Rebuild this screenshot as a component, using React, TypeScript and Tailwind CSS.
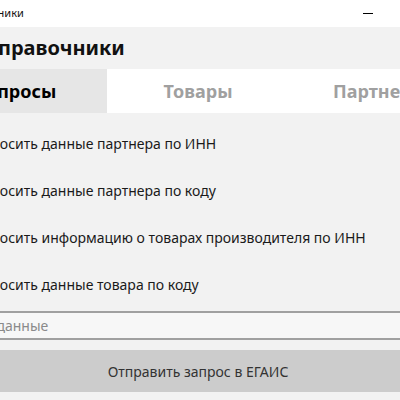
import React from 'react';

const items = [
    'Запросить данные партнера по ИНН',
    'Запросить данные партнера по коду',
    'Запросить информацию о товарах производителя по ИНН',
    'Запросить данные товара по коду',
];

export default function App() {
    return (
        <div className="w-[400px] h-[400px] overflow-hidden bg-[#f2f2f2] font-['Noto_Sans',sans-serif]">
            <div className="ml-[-75px] w-[546px]">
                {/* title bar */}
                <div className="h-[27px] bg-white flex items-center justify-between">
                    <span className="pl-[27px] text-[11px] text-[#111]">Справочники</span>
                    <div className="flex">
                        <div className="w-[46px] h-[27px] flex items-center justify-center">
                            <div className="w-[10px] h-[1px] bg-black" />
                        </div>
                        <div className="w-[80px]" />
                    </div>
                </div>

                {/* header */}
                <div className="h-[42px] flex items-center pl-[60px]">
                    <h1 className="text-[20px] font-bold text-[#111] leading-none">Справочники</h1>
                </div>

                {/* tabs */}
                <div className="grid grid-cols-3 h-[44px] bg-white">
                    <div className="bg-[#e6e6e6] flex items-center justify-center text-[18px] font-bold text-black">Запросы</div>
                    <div className="flex items-center justify-center text-[18px] font-bold text-[#a0a0a0]">Товары</div>
                    <div className="flex items-center justify-center text-[18px] font-bold text-[#a0a0a0]">Партнеры</div>
                </div>

                {/* list */}
                <div className="pt-[7px] pl-[42px]">
                    {items.map((t) => (
                        <div key={t} className="h-[47px] flex items-center text-[14px] text-[#1a1a1a]">{t}</div>
                    ))}
                </div>

                {/* input */}
                <div className="mt-[3px] px-[10px]">
                    <div className="h-[29px] border-y-2 border-[#a0a0a0] bg-[#f7f7f7] flex items-center pl-[2px] text-[14px] text-[#8a8a8a]">
                        Введите данные
                    </div>
                </div>

                {/* send */}
                <div className="mt-[10px] px-[10px]">
                    <div className="h-[42px] bg-[#cccccc] flex items-center justify-center text-[14px] text-[#333]">
                        Отправить запрос в ЕГАИС
                    </div>
                </div>
            </div>
        </div>
    );
}
